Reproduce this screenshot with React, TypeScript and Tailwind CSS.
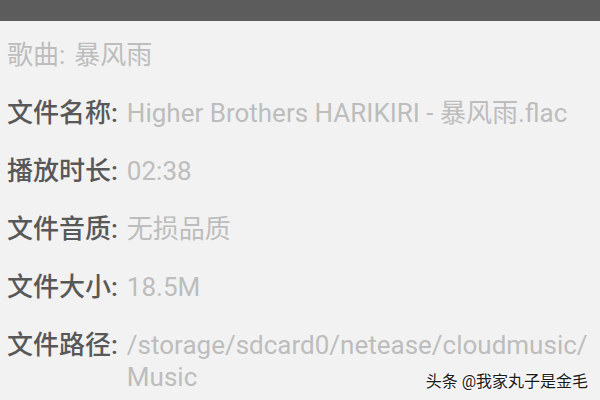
const rows: { label: string; value: string; dim?: boolean }[] = [
  { label: "歌曲:", value: "暴风雨", dim: true },
  { label: "文件名称:", value: "Higher Brothers HARIKIRI - 暴风雨.flac" },
  { label: "播放时长:", value: "02:38" },
  { label: "文件音质:", value: "无损品质" },
  { label: "文件大小:", value: "18.5M" },
  { label: "文件路径:", value: "/storage/sdcard0/netease/cloudmusic/ Music" },
];

export default function App() {
  return (
    <div
      className="relative w-[600px] h-[400px] overflow-hidden bg-[#f2f2f2]"
      style={{ fontFamily: 'Roboto, "Noto Sans CJK SC", sans-serif' }}
    >
      <div className="h-[21px] bg-[#5c5c5c]" />
      <div className="flex flex-col gap-[26px] pl-[7px] pr-[2px] pt-[18px]">
        {rows.map((r) => (
          <div key={r.label} className="flex text-[26px] leading-[32px]">
            <span
              className={
                r.dim ? "shrink-0 text-[#bdbdbd]" : "shrink-0 font-medium text-[#585858]"
              }
            >
              {r.label}
            </span>
            <span className="pl-[9px] text-[#bdbdbd]">{r.value}</span>
          </div>
        ))}
      </div>
      <div
        className="absolute right-[12px] bottom-[8px] text-[16px] leading-[20px] text-[#1a1a1a]"
        style={{ textShadow: "0 0 2px #fff, 0 0 2px #fff, 0 0 3px #fff" }}
      >
        头条 @我家丸子是金毛
      </div>
    </div>
  );
}
